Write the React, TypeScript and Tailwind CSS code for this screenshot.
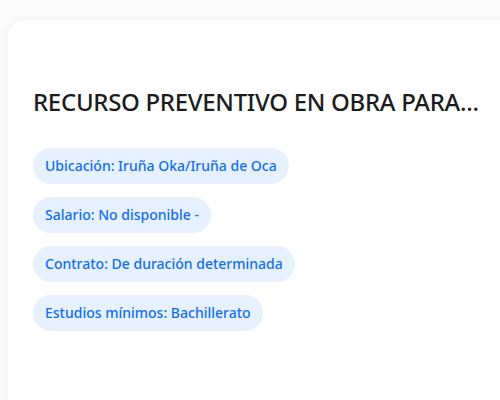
const TAGS = [
  "Ubicación: Iruña Oka/Iruña de Oca",
  "Salario: No disponible -",
  "Contrato: De duración determinada",
  "Estudios mínimos: Bachillerato",
];

export default function App() {
  return (
    <div className="h-[400px] overflow-hidden bg-[#fbfbfb] pl-2 pt-5 font-['Noto_Sans',sans-serif]">
      <div className="h-[420px] w-[520px] rounded-2xl bg-white pl-[25px] pt-[66px] shadow-[0_0_10px_rgba(0,0,0,0.05)]">
        <h1 className="whitespace-nowrap text-[24px] font-medium leading-8 tracking-[-0.3px] text-[#1c1c1c]">
          RECURSO PREVENTIVO EN OBRA PARA...
        </h1>
        <div className="mt-[30px] flex flex-col items-start gap-[13px]">
          {TAGS.map((t) => (
            <span
              key={t}
              className="rounded-full bg-[#e7f1fe] px-3 py-2 text-sm leading-5 font-medium text-[#0f6ef5]"
            >
              {t}
            </span>
          ))}
        </div>
      </div>
    </div>
  );
}
